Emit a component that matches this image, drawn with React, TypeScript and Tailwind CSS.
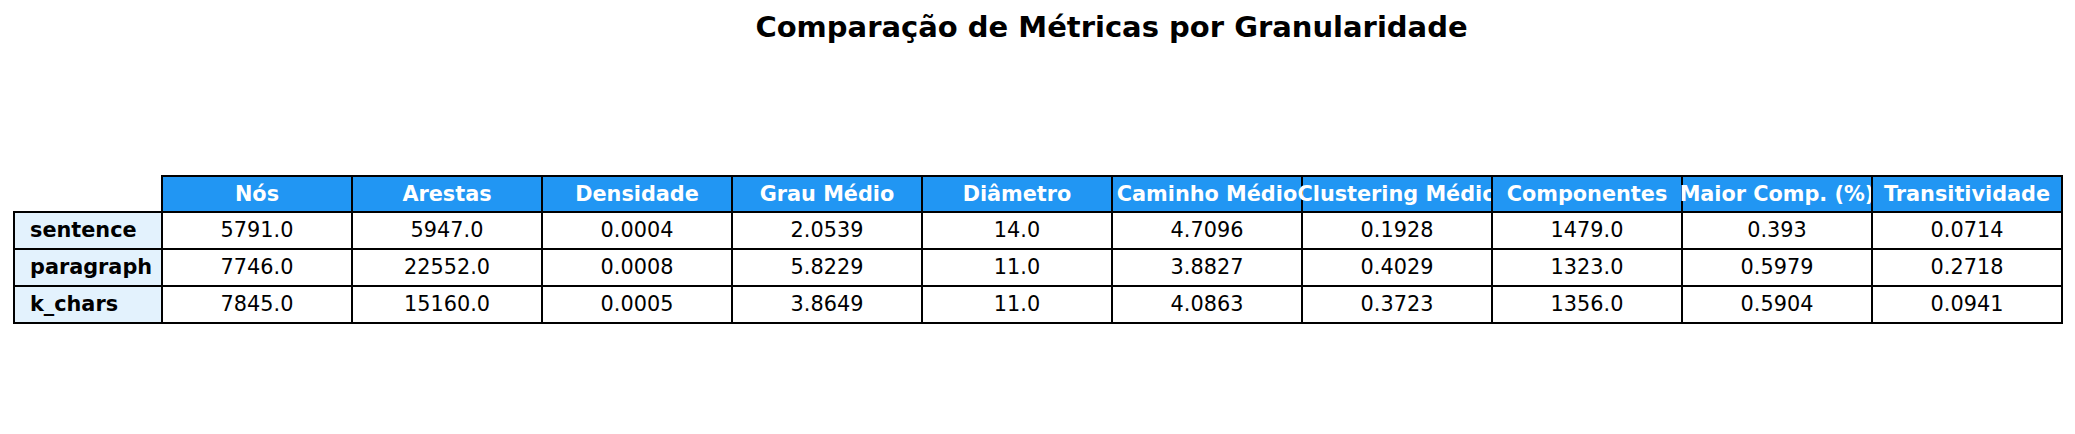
const columns = [
  "Nós",
  "Arestas",
  "Densidade",
  "Grau Médio",
  "Diâmetro",
  "Caminho Médio",
  "Clustering Médio",
  "Componentes",
  "Maior Comp. (%)",
  "Transitividade",
];

const rows: { label: string; values: string[] }[] = [
  {
    label: "sentence",
    values: ["5791.0", "5947.0", "0.0004", "2.0539", "14.0", "4.7096", "0.1928", "1479.0", "0.393", "0.0714"],
  },
  {
    label: "paragraph",
    values: ["7746.0", "22552.0", "0.0008", "5.8229", "11.0", "3.8827", "0.4029", "1323.0", "0.5979", "0.2718"],
  },
  {
    label: "k_chars",
    values: ["7845.0", "15160.0", "0.0005", "3.8649", "11.0", "4.0863", "0.3723", "1356.0", "0.5904", "0.0941"],
  },
];

export default function App() {
  return (
    <div className="w-[2075px] h-[434px] bg-white font-['DejaVu_Sans',sans-serif] text-black overflow-hidden">
      {/* Title — centred over the axes area, not the whole figure */}
      <div className="pt-[10px] pl-[148px] text-center text-[29px] leading-[34px] font-bold">
        Comparação de Métricas por Granularidade
      </div>

      {/* Table: cells are relative so later cells paint over earlier overflowing text */}
      <div className="mt-[131px] ml-[13px] flex flex-col text-[20.8px] leading-none">
        {/* Header row */}
        <div className="flex h-[38px]">
          <div className="w-[150px] shrink-0" />
          {columns.map((c) => (
            <div
              key={c}
              className="relative -ml-[2px] w-[192px] shrink-0 flex items-center justify-center border-2 border-black bg-[#2196F3] text-white font-bold whitespace-nowrap"
            >
              <span>{c}</span>
            </div>
          ))}
        </div>

        {/* Data rows */}
        {rows.map((r) => (
          <div key={r.label} className="flex h-[39px] -mt-[2px]">
            <div className="relative w-[150px] shrink-0 flex items-center pl-[15px] border-2 border-black bg-[#E3F2FD] font-bold whitespace-nowrap">
              <span>{r.label}</span>
            </div>
            {r.values.map((v, i) => (
              <div
                key={i}
                className="relative -ml-[2px] w-[192px] shrink-0 flex items-center justify-center border-2 border-black bg-white whitespace-nowrap"
              >
                <span>{v}</span>
              </div>
            ))}
          </div>
        ))}
      </div>
    </div>
  );
}
